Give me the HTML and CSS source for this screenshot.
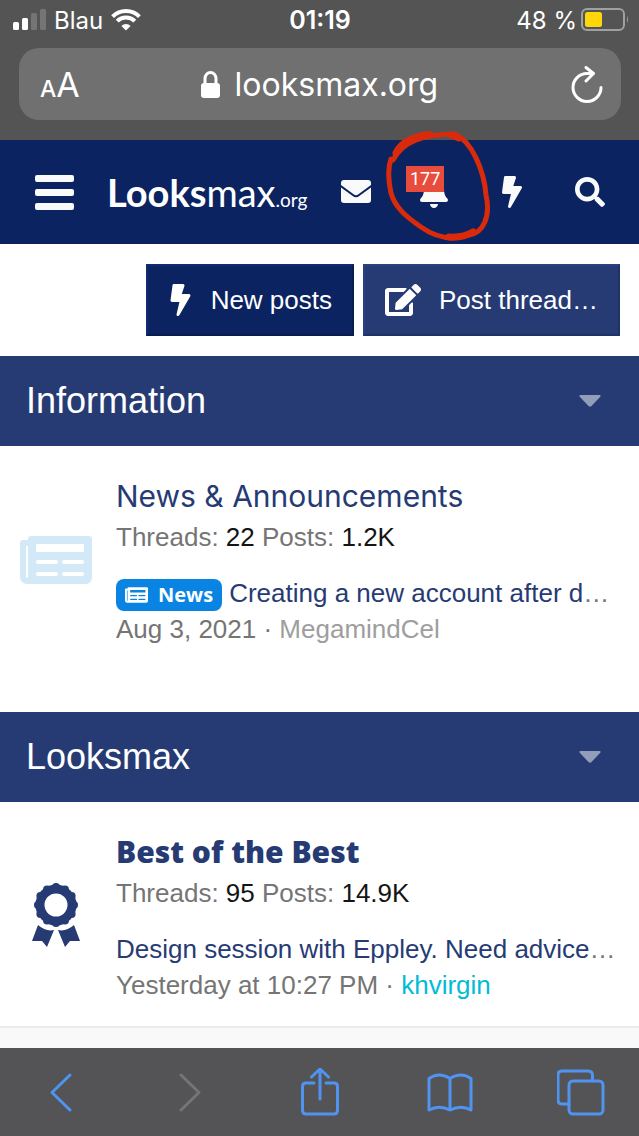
FILE: index.html
```html
<!DOCTYPE html>
<html lang="en">
<head>
    <meta charset="UTF-8">
    <meta name="viewport" content="width=device-width, initial-scale=1.0">
    <title>Looksmax.org</title>
    <link rel="stylesheet" href="styles.css">
</head>
<body>
    <!-- shared icons -->
    <svg class="sprite" aria-hidden="true">
        <symbol id="bolt" viewBox="0 0 320 512">
            <path d="M296 160H180.6l42.6-129.8C227.2 15 215.7 0 200 0H56C44 0 33.8 8.9 32.2 20.8l-32 240C-1.7 275.2 9.5 288 24 288h118.7L96.6 482.5c-3.6 15.2 8 29.5 23.3 29.5 8.4 0 16.4-4.4 20.8-12l176-304c9.3-15.9-2.2-36-20.7-36z"/>
        </symbol>
        <symbol id="newspaper" viewBox="0 0 72 48">
            <path fill-rule="evenodd" d="M11 0H69a3 3 0 0 1 3 3V42a6 6 0 0 1-6 6H7a7 7 0 0 1-7-7V7a3 3 0 0 1 3-3H8V3a3 3 0 0 1 3-3zM6 10V41a1 1 0 0 0 2 0V10zM17 8a1 1 0 0 0-1 1V15a1 1 0 0 0 1 1H63a1 1 0 0 0 1-1V9a1 1 0 0 0-1-1zM18 24a2 2 0 0 0 0 4H36a2 2 0 0 0 0-4zM44 24a2 2 0 0 0 0 4H62a2 2 0 0 0 0-4zM18 36a2 2 0 0 0 0 4H36a2 2 0 0 0 0-4zM44 36a2 2 0 0 0 0 4H62a2 2 0 0 0 0-4z"/>
        </symbol>
        <symbol id="caret" viewBox="0 0 22 12">
            <path d="M1.500 0H20.500Q22.500 .5 21 2L12.500 11Q11 12.500 9.500 11L1 2Q-.5 .5 1.500 0z"/>
        </symbol>
    </svg>

    <div class="browser-top">
        <div class="status">
            <div class="status-left">
                <svg width="33" height="22" viewBox="0 0 33 22" fill="#fff">
                    <rect x="0" y="13" width="6" height="8" rx="1.500"/>
                    <rect x="9" y="9" width="6" height="12" rx="1.500"/>
                    <rect x="18" y="4" width="6" height="17" rx="1.500" fill="#757575"/>
                    <rect x="27" y="0" width="6" height="21" rx="1.500" fill="#757575"/>
                </svg>
                <span>Blau</span>
                <svg width="30" height="22" viewBox="0 0 30 22" fill="none" stroke="#fff" stroke-width="4">
                    <path d="M1.600 7.600A19 19 0 0 1 28.400 7.600"/>
                    <path d="M6.200 12.200A12.500 12.500 0 0 1 23.800 12.200"/>
                    <path d="M10.400 16.900A6.500 6.500 0 0 1 19.600 16.900L15 21.500z" fill="#fff" stroke="none"/>
                </svg>
            </div>
            <strong class="clock">01:19</strong>
            <div class="status-right">
                <span>48 %</span>
                <svg width="48" height="24" viewBox="0 0 48 24">
                    <rect x="1" y="1" width="42" height="21" rx="5" fill="none" stroke="#a0a0a0" stroke-width="2"/>
                    <rect x="4" y="4" width="17" height="15" rx="2.500" fill="#ffd60a"/>
                    <path d="M46 8q2 3.500 0 7z" fill="#a0a0a0"/>
                </svg>
            </div>
        </div>
        <div class="address">
            <button class="text-size" aria-label="Text size"><small>A</small>A</button>
            <div class="host">
                <svg width="19" height="27" viewBox="0 0 19 27">
                    <rect x="0" y="12" width="19" height="15" rx="3" fill="#fff"/>
                    <path d="M4 13V7.500a5.500 6 0 0 1 11 0V13" fill="none" stroke="#fff" stroke-width="3"/>
                </svg>
                <span>looksmax.org</span>
            </div>
            <button class="reload" aria-label="Reload">
                <svg width="32" height="37" viewBox="0 0 32 37" fill="none" stroke="#fff" stroke-width="3" stroke-linecap="round" stroke-linejoin="round">
                    <path d="M30 21.500A14 14 0 1 1 16 7.500H22M15 1.500L22.500 7.500L15 15"/>
                </svg>
            </button>
        </div>
    </div>

    <header class="site-header">
        <button class="menu" aria-label="Menu"><span></span><span></span><span></span></button>
        <a class="logo" href="#"><b>Looks</b>max<small>.org</small></a>
        <nav class="header-links">
            <a href="#" aria-label="Inbox">
                <svg width="30" height="24" viewBox="0 0 30 24">
                    <rect width="30" height="23" rx="3"/>
                    <path d="M-1 5.500L12 15Q15 17.500 18 15L31 5.500" fill="none" stroke="#0b2360" stroke-width="2"/>
                </svg>
            </a>
            <a class="alerts" href="#" aria-label="Alerts, 177">
                <svg width="28" height="32" viewBox="0 0 448 512">
                    <path d="M224 512c35.320 0 63.970-28.650 63.970-64H160.030c0 35.350 28.650 64 63.970 64zm215.390-149.710c-19.320-20.760-55.470-51.990-55.470-154.290 0-77.700-54.480-139.900-127.940-155.160V32c0-17.670-14.320-32-31.980-32s-31.980 14.330-31.980 32v20.840C118.560 68.100 64.080 130.300 64.080 208c0 102.300-36.150 133.530-55.470 154.290-6 6.450-8.660 14.160-8.610 21.710.11 16.400 12.980 32 32.100 32h383.800c19.120 0 32-15.600 32.100-32 .05-7.550-2.610-15.270-8.610-21.710z"/>
                </svg>
                <span class="badge">177</span>
                <svg class="scribble" width="106" height="114" viewBox="0 0 106 114" fill="none" stroke="#d92b0c" stroke-linecap="round" stroke-linejoin="round">
                    <path stroke-width="5" d="M8 31C18 12 39 5 70 5C86 12 99 40 101 66C106 88 98 104 84 106C66 112 50 108 36 98C20 87 10 78 6 64C3 50 3 38 6 30"/>
                    <path stroke-width="7" d="M11 24C16 13 30 7 44 5.500M66 6L74 9M64 108Q78 109 88 103"/>
                </svg>
            </a>
            <a href="#" aria-label="New posts"><svg width="20" height="32"><use href="#bolt"/></svg></a>
            <a href="#" aria-label="Search">
                <svg width="30" height="30" viewBox="0 0 512 512">
                    <path d="M505 442.700L405.300 343c-4.500-4.500-10.600-7-17-7H372c27.600-35.300 44-79.700 44-128C416 93.100 322.900 0 208 0S0 93.100 0 208s93.100 208 208 208c48.300 0 92.700-16.400 128-44v16.300c0 6.400 2.500 12.500 7 17l99.700 99.700c9.400 9.400 24.600 9.400 33.900 0l28.300-28.300c9.400-9.400 9.400-24.600.1-34zM208 336c-70.700 0-128-57.200-128-128 0-70.700 57.200-128 128-128 70.700 0 128 57.200 128 128 0 70.700-57.200 128-128 128z"/>
                </svg>
            </a>
        </nav>
    </header>

    <main>
        <div class="actions">
            <button class="btn btn-dark">
                <svg width="25" height="32"><use href="#bolt"/></svg>
                New posts
            </button>
            <button class="btn">
                <svg width="36" height="32" viewBox="0 0 576 512">
                    <path d="M402.600 83.200l90.200 90.200c3.800 3.800 3.800 10 0 13.800L274.400 405.600l-92.800 10.300c-12.400 1.400-22.900-9.100-21.500-21.500l10.300-92.800L388.800 83.200c3.800-3.800 10-3.800 13.800 0zm162-22.900l-48.800-48.800c-15.200-15.200-39.900-15.200-55.200 0l-35.400 35.400c-3.800 3.800-3.800 10 0 13.800l90.200 90.200c3.800 3.800 10 3.800 13.800 0l35.400-35.400c15.200-15.300 15.200-40 0-55.200zM384 346.200V448H64V128h229.800c3.200 0 6.200-1.300 8.500-3.500l40-40c7.600-7.600 2.200-20.500-8.500-20.500H48C21.500 64 0 85.500 0 112v352c0 26.500 21.500 48 48 48h352c26.500 0 48-21.500 48-48V306.200c0-10.700-12.900-16-20.500-8.500l-40 40c-2.200 2.300-3.500 5.300-3.500 8.500z"/>
                </svg>
                Post thread…
            </button>
        </div>

        <section class="category">
            <div class="category-header">
                <h2>Information</h2>
                <button aria-label="Toggle Information"><svg width="22" height="12"><use href="#caret"/></svg></button>
            </div>
            <div class="node">
                <div class="node-icon news"><svg width="72" height="48"><use href="#newspaper"/></svg></div>
                <div class="node-body">
                    <h3><a href="#">News &amp; Announcements</a></h3>
                    <p class="stats">Threads: <span>22</span> Posts: <span>1.2K</span></p>
                    <p class="latest"><a class="label" href="#"><svg width="23" height="16"><use href="#newspaper"/></svg>News</a><a href="#">Creating a new account after d</a>…</p>
                    <p class="meta">Aug 3, 2021 · <a href="#">MegamindCel</a></p>
                </div>
            </div>
        </section>

        <section class="category">
            <div class="category-header">
                <h2>Looksmax</h2>
                <button aria-label="Toggle Looksmax"><svg width="22" height="12"><use href="#caret"/></svg></button>
            </div>
            <div class="node">
                <div class="node-icon">
                    <svg width="48" height="64" viewBox="0 0 48 64">
                        <circle cx="24" cy="22" r="16" fill="none" stroke="#263b74" stroke-width="9"/>
                        <circle cx="24" cy="22" r="18" fill="none" stroke="#263b74" stroke-width="8" stroke-linecap="round" pathLength="12" stroke-dasharray="0 1"/>
                        <path d="M6 42Q14 49 22 47L15 64L10 58L0 58z"/>
                        <path d="M42 42Q34 49 26 47L33 64L38 58L48 58z"/>
                    </svg>
                </div>
                <div class="node-body">
                    <h3 class="unread"><a href="#">Best of the Best</a></h3>
                    <p class="stats">Threads: <span>95</span> Posts: <span>14.9K</span></p>
                    <p class="latest"><a href="#">Design session with Eppley. Need advice</a>…</p>
                    <p class="meta">Yesterday at 10:27 PM · <a class="member" href="#">khvirgin</a></p>
                </div>
            </div>
        </section>
    </main>

    <nav class="browser-bottom">
        <button aria-label="Back"><svg width="48" height="48" viewBox="0 0 48 48"><path d="M34 7L16 24.500L34 42"/></svg></button>
        <button aria-label="Forward" disabled><svg width="48" height="48" viewBox="0 0 48 48"><path d="M15 7L33 24.500L15 42"/></svg></button>
        <button aria-label="Share"><svg width="48" height="48" viewBox="0 0 48 48"><path d="M17 15H9Q5.500 15 5.500 18.500V42Q5.500 46 9 46H37Q40.500 46 40.500 42V18.500Q40.500 15 37 15H29M23 31V1M14.500 9L23 1L31.500 9"/></svg></button>
        <button aria-label="Bookmarks"><svg width="48" height="48" viewBox="0 0 48 48"><path d="M23 10.500Q12 3.500 2 10.500V42Q12 36.500 23 42Q34 36.500 44 42V10.500Q34 3.500 23 10.500V41"/></svg></button>
        <button aria-label="Tabs"><svg width="48" height="48" viewBox="0 0 48 48"><rect x="12" y="13" width="34" height="33" rx="4"/><path d="M12 36H5Q1 36 1 32V7Q1 3 5 3H31Q35.500 3 35.500 7.500V13"/></svg></button>
    </nav>
</body>
</html>
```
FILE: styles.css
```css
* {
    box-sizing: border-box;
}
body {
    margin: 0;
    min-height: 100vh;
    display: flex;
    flex-direction: column;
    background: #fff;
    color: #757575;
    font-family: 'Liberation Sans', Arial, sans-serif;
    font-size: 26px;
}
h2, h3, p {
    margin: 0;
    font-weight: 400;
}
a {
    color: #263b74;
    text-decoration: none;
}
button {
    background: none;
    border: none;
    padding: 0;
    color: #fff;
    font: inherit;
    cursor: pointer;
}
svg {
    display: block;
    flex-shrink: 0;
}
svg:not([fill]) {
    fill: currentColor;
}
.sprite {
    position: absolute;
    width: 0;
    height: 0;
}

/* browser bars */
.browser-top {
    background: #545454;
    color: #fff;
    font-family: Inter, sans-serif;
    padding: 0 18px 20px 19px;
}
.status {
    display: grid;
    grid-template-columns: 1fr auto 1fr;
    align-items: center;
    height: 48px;
    padding: 0 0 8px;
    margin: 0 -6px;
    font-size: 24px;
}
.status-left, .status-right {
    display: flex;
    align-items: center;
    gap: 8px;
}
.status-right {
    justify-content: flex-end;
    gap: 4px;
    margin-right: -2px;
}
.clock {
    font-size: 25px;
    font-weight: 600;
}
.address {
    display: flex;
    align-items: center;
    justify-content: space-between;
    height: 72px;
    padding: 0 18px 0 21px;
    background: #707070;
    border-radius: 20px;
}
.text-size {
    font-size: 34px;
}
.text-size small {
    font-size: 23px;
    font-weight: 500;
}
.host {
    display: flex;
    align-items: center;
    gap: 15px;
    font-size: 32px;
}
.reload {
    padding-left: 12px;
}
.browser-bottom {
    display: flex;
    justify-content: space-between;
    align-items: center;
    height: 88px;
    padding: 0 34px 0 36px;
    margin-top: auto;
    background: #545456;
}
.browser-bottom svg {
    fill: none;
    stroke: #4f94f0;
    stroke-width: 3;
    stroke-linecap: round;
    stroke-linejoin: round;
}
.browser-bottom button:disabled svg {
    stroke: #757577;
}

/* site header */
.site-header {
    display: flex;
    align-items: center;
    height: 104px;
    padding: 0 10px 0 35px;
    background: #0b2360;
}
.menu {
    display: grid;
    gap: 7px;
    width: 39px;
    margin-right: 33px;
}
.menu span {
    height: 7px;
    border-radius: 2px;
    background: #fafafa;
}
.logo {
    color: #fff;
    font-family: Lato, sans-serif;
    font-size: 38px;
    white-space: nowrap;
}
.logo b {
    font-weight: 700;
}
.logo small {
    font-size: 19px;
}
.header-links {
    display: flex;
    margin-left: auto;
}
.header-links a {
    display: flex;
    align-items: center;
    justify-content: center;
    width: 78px;
    height: 104px;
    color: #fafafa;
}
.alerts {
    position: relative;
}
.badge {
    position: absolute;
    top: 26px;
    left: 11px;
    padding: 0 4px;
    background: #e74c3c;
    color: #fff;
    font-family: Roboto, sans-serif;
    font-size: 18px;
    line-height: 26px;
}
.scribble {
    position: absolute;
    top: -11px;
    left: -10px;
}

/* buttons above the list */
.actions {
    display: flex;
    justify-content: flex-end;
    gap: 9px;
    padding: 20px 19px;
}
.btn {
    display: flex;
    align-items: center;
    gap: 18px;
    height: 72px;
    padding: 0 20px;
    background: #263b74;
    border: 2px solid;
    border-color: #2a4080 #1f3265 #1f3265 #2a4080;
}
.btn-dark {
    background: #0b2360;
    border-color: #0d2a72 #091c4e #091c4e #0d2a72;
}

/* forum list */
.category {
    padding-bottom: 20px;
}
.category-header {
    display: flex;
    align-items: center;
    justify-content: space-between;
    height: 90px;
    padding: 0 38px 0 26px;
    background: #263b74;
    color: #fff;
}
.category-header h2 {
    font-size: 36px;
}
.category-header button {
    color: #939dba;
}
.node {
    display: flex;
    border-bottom: 2px solid #eaeaea;
}
.category:not(:last-child) .node {
    padding-bottom: 20px;
    border-bottom-color: transparent;
}
.category:last-child {
    background: #f9f9f9;
}
.category:last-child .node {
    background: #fff;
}
.node-icon {
    display: flex;
    justify-content: center;
    width: 112px;
    flex-shrink: 0;
    padding-top: 81px;
    color: #263b74;
}
.node-icon.news {
    padding-top: 90px;
    color: #d4e9f8;
}
.node-body {
    flex: 1;
    min-width: 0;
    padding: 30px 19px 23px 4px;
}
h3 {
    font-family: Inter, sans-serif;
    font-size: 30px;
    line-height: 40px;
}
.unread {
    font-family: 'Open Sans', sans-serif;
    font-weight: 800;
}
.stats {
    line-height: 42px;
    margin-bottom: 17px;
}
.stats span {
    color: #141414;
}
.latest, .meta {
    line-height: 36px;
    white-space: nowrap;
    overflow: hidden;
    text-overflow: ellipsis;
}
.label {
    display: inline-flex;
    align-items: center;
    gap: 10px;
    height: 32px;
    padding: 0 9px;
    margin-right: 7px;
    border-radius: 8px;
    background: #0984e3;
    color: #fff;
    font-family: 'Open Sans', sans-serif;
    font-size: 20px;
    font-weight: 700;
    vertical-align: middle;
}
.meta a {
    color: #9e9e9e;
}
.meta .member {
    color: #00bcd4;
}
```
